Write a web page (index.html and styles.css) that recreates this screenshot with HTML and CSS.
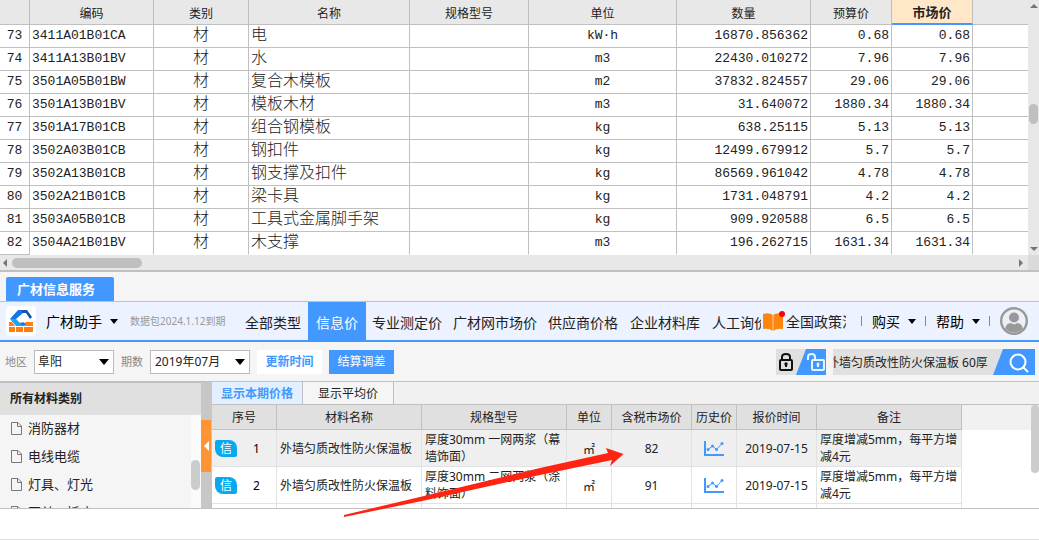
FILE: index.html
```
<!DOCTYPE html>
<html lang="zh-CN">
<head>
<meta charset="utf-8">
<title>广材信息服务</title>
<link rel="stylesheet" href="styles.css">
</head>
<body>
<section class="sheet">
  <div class="sheet-main">
    <table class="grid">
      <colgroup><col class="c-no"><col class="c-code"><col class="c-kind"><col class="c-name"><col class="c-spec"><col class="c-unit"><col class="c-qty"><col class="c-price"><col class="c-price"><col></colgroup>
      <thead><tr><th></th><th>编码</th><th>类别</th><th>名称</th><th>规格型号</th><th>单位</th><th>数量</th><th>预算价</th><th class="current">市场价</th><th></th></tr></thead>
      <tbody>
        <tr><td>73</td><td>3411A01B01CA</td><td>材</td><td>电</td><td></td><td>kW·h</td><td>16870.856362</td><td>0.68</td><td>0.68</td><td></td></tr>
        <tr><td>74</td><td>3411A13B01BV</td><td>材</td><td>水</td><td></td><td>m3</td><td>22430.010272</td><td>7.96</td><td>7.96</td><td></td></tr>
        <tr><td>75</td><td>3501A05B01BW</td><td>材</td><td>复合木模板</td><td></td><td>m2</td><td>37832.824557</td><td>29.06</td><td>29.06</td><td></td></tr>
        <tr><td>76</td><td>3501A13B01BV</td><td>材</td><td>模板木材</td><td></td><td>m3</td><td>31.640072</td><td>1880.34</td><td>1880.34</td><td></td></tr>
        <tr><td>77</td><td>3501A17B01CB</td><td>材</td><td>组合钢模板</td><td></td><td>kg</td><td>638.25115</td><td>5.13</td><td>5.13</td><td></td></tr>
        <tr><td>78</td><td>3502A03B01CB</td><td>材</td><td>钢扣件</td><td></td><td>kg</td><td>12499.679912</td><td>5.7</td><td>5.7</td><td></td></tr>
        <tr><td>79</td><td>3502A13B01CB</td><td>材</td><td>钢支撑及扣件</td><td></td><td>kg</td><td>86569.961042</td><td>4.78</td><td>4.78</td><td></td></tr>
        <tr><td>80</td><td>3502A21B01CB</td><td>材</td><td>梁卡具</td><td></td><td>kg</td><td>1731.048791</td><td>4.2</td><td>4.2</td><td></td></tr>
        <tr><td>81</td><td>3503A05B01CB</td><td>材</td><td>工具式金属脚手架</td><td></td><td>kg</td><td>909.920588</td><td>6.5</td><td>6.5</td><td></td></tr>
        <tr><td>82</td><td>3504A21B01BV</td><td>材</td><td>木支撑</td><td></td><td>m3</td><td>196.262715</td><td>1631.34</td><td>1631.34</td><td></td></tr>
      </tbody>
    </table>
    <div class="vbar">
      <svg width="10" height="6" viewBox="0 0 10 6"><path d="M1 5L5 1L9 5Z"/></svg>
      <span class="vthumb"></span>
      <svg width="10" height="6" viewBox="0 0 10 6"><path d="M1 1L5 5L9 1Z"/></svg>
    </div>
  </div>
  <div class="hbar">
    <svg width="6" height="10" viewBox="0 0 6 10"><path d="M5 1L1 5L5 9Z"/></svg>
    <span class="hthumb"></span>
    <svg width="6" height="10" viewBox="0 0 6 10"><path d="M1 1L5 5L1 9Z"/></svg>
    <span class="corner"></span>
  </div>
</section>

<section class="service">
  <div class="service-tabs"><button class="service-tab">广材信息服务</button></div>

  <header class="nav">
    <svg class="logo" width="30" height="30" viewBox="0 0 30 30">
      <rect width="30" height="30" rx="4" fill="#fff"/>
      <path d="M3 16H6L9 20H3ZM3 21H9V26H3ZM10 21H17V26H10ZM18 21H27V26H18ZM20 16H27V20H18V18ZM13 18L15 16L17 18V20H11Z" fill="#ff7f0e"/>
      <path d="M12 4H21L17 7L10 13H4Z" fill="#1477e8"/>
      <path d="M4 13H10L16 19L14 20H10Z" fill="#19a7f5"/>
      <path d="M16 4H21L26 11L24 13L20 7H16Z" fill="#1553b5"/>
      <path d="M14 18L17 16L20 18L17 20Z" fill="#1477e8"/>
    </svg>
    <button class="menu brand">广材助手 <svg width="8" height="5" viewBox="0 0 8 5"><path d="M0 0H8L4 5Z"/></svg></button>
    <span class="expiry">数据包2024.1.12到期</span>
    <nav class="links">
      <a href="#">全部类型</a><a href="#" class="active">信息价</a><a href="#">专业测定价</a><a href="#">广材网市场价</a><a href="#">供应商价格</a><a href="#">企业材料库</a><a href="#">人工询价</a>
    </nav>
    <a href="#" class="policy">
      <svg width="23" height="24" viewBox="0 0 23 24"><path d="M0 5Q6 3 10 6Q14 3 20 5V20Q14 19 10 22Q6 19 0 20Z" fill="#ff850d"/><path d="M10 6V22" stroke="#ffd3a0"/><circle cx="19" cy="5" r="3" fill="#f00"/></svg>
      <span>全国政策法规</span>
    </a>
    <i class="sep"></i>
    <button class="menu">购买 <svg width="8" height="5" viewBox="0 0 8 5"><path d="M0 0H8L4 5Z"/></svg></button>
    <i class="sep"></i>
    <button class="menu">帮助 <svg width="8" height="5" viewBox="0 0 8 5"><path d="M0 0H8L4 5Z"/></svg></button>
    <i class="sep"></i>
    <button class="avatar" aria-label="用户"><svg width="28" height="28" viewBox="0 0 28 28"><circle cx="14" cy="14" r="12.8" fill="#eceff5" stroke="#999" stroke-width="2.4"/><circle cx="14" cy="10.5" r="5" fill="#999"/><path d="M5 22Q6 16 11 16Q14 18.500 17 16Q22 16 23 22Q14 29 5 22Z" fill="#999"/></svg></button>
  </header>

  <div class="toolbar">
    <label for="area">地区</label>
    <span class="pick pick-area"><select id="area"><option>阜阳</option></select><svg width="10" height="6" viewBox="0 0 10 6"><path d="M0 0H10L5 6Z"/></svg></span>
    <label for="term">期数</label>
    <span class="pick pick-term"><select id="term"><option>2019年07月</option></select><svg width="10" height="6" viewBox="0 0 10 6"><path d="M0 0H10L5 6Z"/></svg></span>
    <button class="btn refresh">更新时间</button>
    <button class="btn settle">结算调差</button>
    <button class="lock" aria-label="锁定">
      <svg width="50" height="26" viewBox="0 0 50 26">
        <path d="M30 0H50V26H20Z" fill="#4398ff"/>
        <g fill="none" stroke="#111" stroke-width="2"><rect x="4" y="11" width="12" height="10" rx="1"/><path d="M6 11V8Q6 5 10 5Q14 5 14 8V11"/><path d="M10 14V18"/></g>
        <circle cx="10" cy="15" r="1.700" fill="#111"/>
        <g fill="none" stroke="#e9f3ff" stroke-width="2"><rect x="36" y="11" width="12" height="10" rx="1"/><path d="M39 11V8Q39 5 35.500 5Q32 5 32 8V11"/><path d="M42 14V18"/></g>
        <circle cx="42" cy="15" r="1.500" fill="#e9f3ff"/>
      </svg>
    </button>
    <form class="search">
      <input type="text" aria-label="搜索材料" value="外墙匀质改性防火保温板 60厚">
      <button type="button" aria-label="搜索"><svg width="42" height="26" viewBox="0 0 42 26"><path d="M10 0H42V26H0Z" fill="#4398ff"/><circle cx="25" cy="13" r="7.500" fill="none" stroke="#fff" stroke-width="2"/><path d="M30.500 18.500L35 23" stroke="#fff" stroke-width="2"/></svg></button>
    </form>
  </div>

  <div class="work">
    <aside class="side">
      <h2>所有材料类别</h2>
      <div class="side-body">
        <ul>
          <li><svg width="11" height="13" viewBox="0 0 11 13"><path d="M.5.5H7L10.500 4V12.500H.5ZM6.500.5V4.500H10.500"/></svg>消防器材</li>
          <li><svg width="11" height="13" viewBox="0 0 11 13"><path d="M.5.5H7L10.500 4V12.500H.5ZM6.500.5V4.500H10.500"/></svg>电线电缆</li>
          <li><svg width="11" height="13" viewBox="0 0 11 13"><path d="M.5.5H7L10.500 4V12.500H.5ZM6.500.5V4.500H10.500"/></svg>灯具、灯光</li>
          <li><svg width="11" height="13" viewBox="0 0 11 13"><path d="M.5.5H7L10.500 4V12.500H.5ZM6.500.5V4.500H10.500"/></svg>开关、插座</li>
        </ul>
        <div class="side-bar"><span></span></div>
      </div>
    </aside>
    <div class="splitter"><button aria-label="收起"><svg width="5" height="10" viewBox="0 0 5 10"><path d="M5 0V10L0 5Z" fill="#fff"/></svg></button></div>
    <div class="prices">
      <div class="price-tabs"><button class="on">显示本期价格</button><button>显示平均价</button></div>
      <div class="price-body">
        <table class="list">
          <colgroup><col class="p-no"><col class="p-name"><col class="p-name"><col class="p-unit"><col class="p-tax"><col class="p-unit"><col class="p-tax"><col class="p-name"><col></colgroup>
          <thead><tr><th>序号</th><th>材料名称</th><th>规格型号</th><th>单位</th><th>含税市场价</th><th>历史价</th><th>报价时间</th><th>备注</th><th></th></tr></thead>
          <tbody>
            <tr class="sel"><td><div class="order"><span class="tag">信</span><span>1</span></div></td><td>外墙匀质改性防火保温板</td><td>厚度30mm 一网两浆（幕墙饰面）</td><td class="sq">㎡</td><td>82</td><td><svg width="20" height="15" viewBox="0 0 20 15"><path d="M1 0V14H20" class="axis"/><path d="M4 8.500L8.500 5L12.500 8.500L18 2.500" class="trend"/><path d="M4 8.500h0M8.500 5h0M12.500 8.500h0M18 2.500h0" class="dots"/></svg></td><td>2019-07-15</td><td>厚度增减5mm，每平方增减4元</td><td></td></tr>
            <tr><td><div class="order"><span class="tag">信</span><span>2</span></div></td><td>外墙匀质改性防火保温板</td><td>厚度30mm 二网两浆（涂料饰面）</td><td class="sq">㎡</td><td>91</td><td><svg width="20" height="15" viewBox="0 0 20 15"><path d="M1 0V14H20" class="axis"/><path d="M4 8.500L8.500 5L12.500 8.500L18 2.500" class="trend"/><path d="M4 8.500h0M8.500 5h0M12.500 8.500h0M18 2.500h0" class="dots"/></svg></td><td>2019-07-15</td><td>厚度增减5mm，每平方增减4元</td><td></td></tr>
            <tr><td></td><td></td><td></td><td></td><td></td><td></td><td></td><td></td><td></td></tr>
          </tbody>
        </table>
        <span class="price-thumb"></span>
      </div>
    </div>
  </div>
  <svg class="pointer" width="280" height="70" viewBox="0 0 280 70"><path d="M0 68L78 49.500L196 21L264 6L262 1L279.500 7L266 19L268 13L196 28L78 54L0 70Z" fill="#ff2312"/></svg>
</section>
<footer class="foot"></footer>
</body>
</html>
```
FILE: styles.css
```
* { box-sizing: border-box; }

body {
  margin: 0;
  background: #fff;
  color: #222;
  font: 12px/17px "Noto Sans", "Noto Sans CJK SC", sans-serif;
  overflow: hidden;
}

button, input, select { font: inherit; color: inherit; border: 0; padding: 0; margin: 0; background: none; border-radius: 0; }
button { cursor: pointer; }
a { color: inherit; text-decoration: none; }
svg { display: block; flex: none; }
table { border-collapse: separate; border-spacing: 0; table-layout: fixed; width: 100%; }
th { font-weight: 400; }

/* Upper sheet */
.sheet { border-bottom: 2px solid #c0c0c0; }
.sheet-main { display: flex; }
.grid { flex: 1; width: auto; min-width: 0; }
.c-no { width: 30px; }
.c-code { width: 124px; }
.c-kind { width: 95px; }
.c-name { width: 161px; }
.c-spec { width: 119px; }
.c-unit { width: 148px; }
.c-qty { width: 134px; }
.c-price { width: 81px; }
.grid th, .grid td { border-right: 1px solid #c0c0c0; border-bottom: 1px solid #c0c0c0; white-space: nowrap; }
.grid th { height: 25px; padding: 0; background: #e8e8e8; font-family: "Noto Sans CJK SC", sans-serif; }
.grid .current { background: #ffe7c8; border-bottom: 2px solid #4398ff; font-weight: 700; font-size: 13px; }
.grid th:last-child, .grid td:last-child { border-right: 0; }
.grid td { height: 23px; padding: 0 2px; font: 13px/22px "Liberation Mono", "Noto Sans CJK SC", monospace; text-align: right; }
.grid td:nth-child(1), .grid td:nth-child(6) { text-align: center; }
.grid td:nth-child(2) { text-align: left; }
.grid td:nth-child(3) { text-align: center; font-size: 16px; font-weight: 300; }
.grid td:nth-child(4) { text-align: left; font-size: 16px; font-weight: 300; }
.grid tbody tr:last-child td:not(:first-child) { border-bottom-color: #fff; }
.vbar { width: 11px; background: #e8e8e8; display: flex; flex-direction: column; align-items: center; padding: 3px 0; }
.vbar svg, .hbar svg { fill: #70757c; }
.vthumb { width: 9px; height: 20px; border-radius: 5px; background: #bfbfbf; margin: 95px 0 auto; }
.hbar { display: flex; align-items: center; height: 15px; background: #e8e8e8; padding-left: 2px; gap: 4px; }
.hthumb { width: 130px; height: 10px; border-radius: 5px; background: #bfbfbf; margin-right: auto; }
.corner { width: 11px; height: 15px; background: #dadada; }

/* Service panel */
.service { position: relative; background: #f5f5f5; }
.service-tabs { padding: 5px 6px 0; border-bottom: 1px solid #c0c0c0; }
.service-tab { display: block; height: 24px; width: 108px; background: #4398ff; color: #fff; font-size: 13px; font-weight: 700; border-radius: 2px 2px 0 0; text-align: left; padding: 0 11px; white-space: nowrap; }
.nav { display: flex; align-items: center; height: 40px; padding: 0 11px 0 6px; background: #ecf2ff; border-bottom: 2px solid #4398ff; font-size: 14px; white-space: nowrap; }
.menu { display: flex; align-items: center; gap: 8px; color: #000; }
.brand { margin-left: 10px; }
.expiry { margin-left: 12px; width: 109px; font-size: 10px; color: #999; }
.links { display: flex; flex: 1 1 0; min-width: 0; height: 38px; overflow: hidden; }
.links a { padding: 0 5px 0 6px; line-height: 42px; }
.links a:first-child { padding-right: 7px; }
.links a:nth-child(n+5) { padding-right: 6px; }
.links .active { padding: 0 8px; background: #4398ff; color: #fff; }
.policy { display: flex; align-items: center; margin-left: 2px; }
.policy span { width: 60px; overflow: hidden; }
.sep { width: 1px; height: 10px; margin: 0 10px 0 9px; background: #888; }
.policy + .sep { margin-left: 15px; }

.toolbar { display: flex; align-items: center; height: 39px; padding: 0 4px 0 5px; white-space: nowrap; }
.toolbar label { width: 22px; color: #888; font-size: 11px; }
.pick { position: relative; height: 24px; margin: 0 7px; border: 1px solid #bbb; background: #fff; }
.pick select { width: 100%; height: 22px; padding-left: 3px; appearance: none; outline: 0; }
.pick svg { position: absolute; right: 4px; top: 8px; pointer-events: none; }
.pick-area { width: 80px; }
.pick-term { width: 100px; }
.pick-term select { padding-left: 4px; }
.btn { width: 65px; height: 24px; }
.refresh { background: #fff; color: #4398ff; font-weight: 700; }
.settle { margin-left: 7px; background: #4398ff; color: #fff; }
.lock { margin-left: auto; background: #e0e0e0; }
.search { display: flex; width: 202px; margin-left: 7px; background: #e0e0e0; }
.search input { flex: 1; min-width: 0; height: 26px; text-indent: -6px; outline: 0; }

.work { display: flex; height: 128px; border-top: 1px solid #c0c0c0; border-bottom: 1px solid #c0c0c0; overflow: hidden; }
.side { width: 201px; display: flex; flex-direction: column; }
.side h2 { margin: 0; flex: none; height: 33px; padding-left: 10px; border-top: 1px solid #c0c0c0; background: #e0e0e0; font-size: 12px; line-height: 31px; }
.side-body { display: flex; flex: 1; min-height: 0; overflow: hidden; }
.side ul { flex: 1; margin: -1px 0 0; padding: 0 0 0 11px; list-style: none; }
.side li { display: flex; align-items: center; gap: 6px; height: 28px; font-size: 13px; }
.side li svg { fill: none; stroke: #777; }
.side-bar { width: 10px; background: #fafafa; padding-top: 45px; }
.side-bar span { display: block; width: 9px; height: 30px; border-radius: 5px; background: #ccc; }
.splitter { width: 11px; padding-top: 38px; background: #c9c7c5; }
.splitter button { display: flex; align-items: center; justify-content: center; width: 10px; height: 52px; background: #ff9433; }
.prices { flex: 1; min-width: 0; background: #fff; }
.price-tabs { display: flex; height: 23px; background: #f1f1f1; border-bottom: 1px solid #c0c0c0; }
.price-tabs button { width: 91px; border-right: 1px solid #c0c0c0; background: #f5f5f5; }
.price-tabs .on { background: #e2efff; color: #4398ff; font-weight: 700; }
.price-body { position: relative; }
.p-no { width: 65px; }
.p-name { width: 145px; }
.p-unit { width: 45px; }
.p-tax { width: 80px; }
.list th { height: 25px; padding: 0; background: #e0e0e0; border-right: 1px solid #c0c0c0; border-bottom: 1px solid #c0c0c0; }
.list td { height: 37px; padding: 0 3px; border-right: 1px solid #e2e2e2; border-bottom: 1px solid #e2e2e2; text-align: center; }
.list td:nth-child(2), .list td:nth-child(3), .list td:nth-child(8) { text-align: left; }
.list td:nth-child(2) { white-space: nowrap; }
.list td:nth-child(3), .list td:nth-child(8) { padding-right: 0; }
.list th:last-child { background: #f1f1f1; border: 0; }
.list td:last-child { background: #fff; border: 0; }
.list .sel td:not(:last-child) { background: #efefef; }
.list td svg { margin: 0 auto; fill: none; stroke: #4398ff; }
.list .axis { stroke-width: 2; }
.list .trend { stroke-width: 1; }
.list .dots { stroke-width: 3; stroke-linecap: round; }
.order { display: flex; align-items: center; gap: 16px; color: #000; }
.tag { width: 22px; height: 17px; border-radius: 2px 8px 2px 8px; background: #08a9ee; color: #fff; line-height: 17px; }
.list .sq { font-family: "Noto Sans CJK SC", sans-serif; }
.price-thumb { position: absolute; right: 0; top: 0; width: 8px; height: 68px; border-radius: 4px; background: #ccc; }
.pointer { position: absolute; left: 344px; top: 175px; pointer-events: none; }
.foot { height: 31px; border-bottom: 1px solid #ddd; }
```
